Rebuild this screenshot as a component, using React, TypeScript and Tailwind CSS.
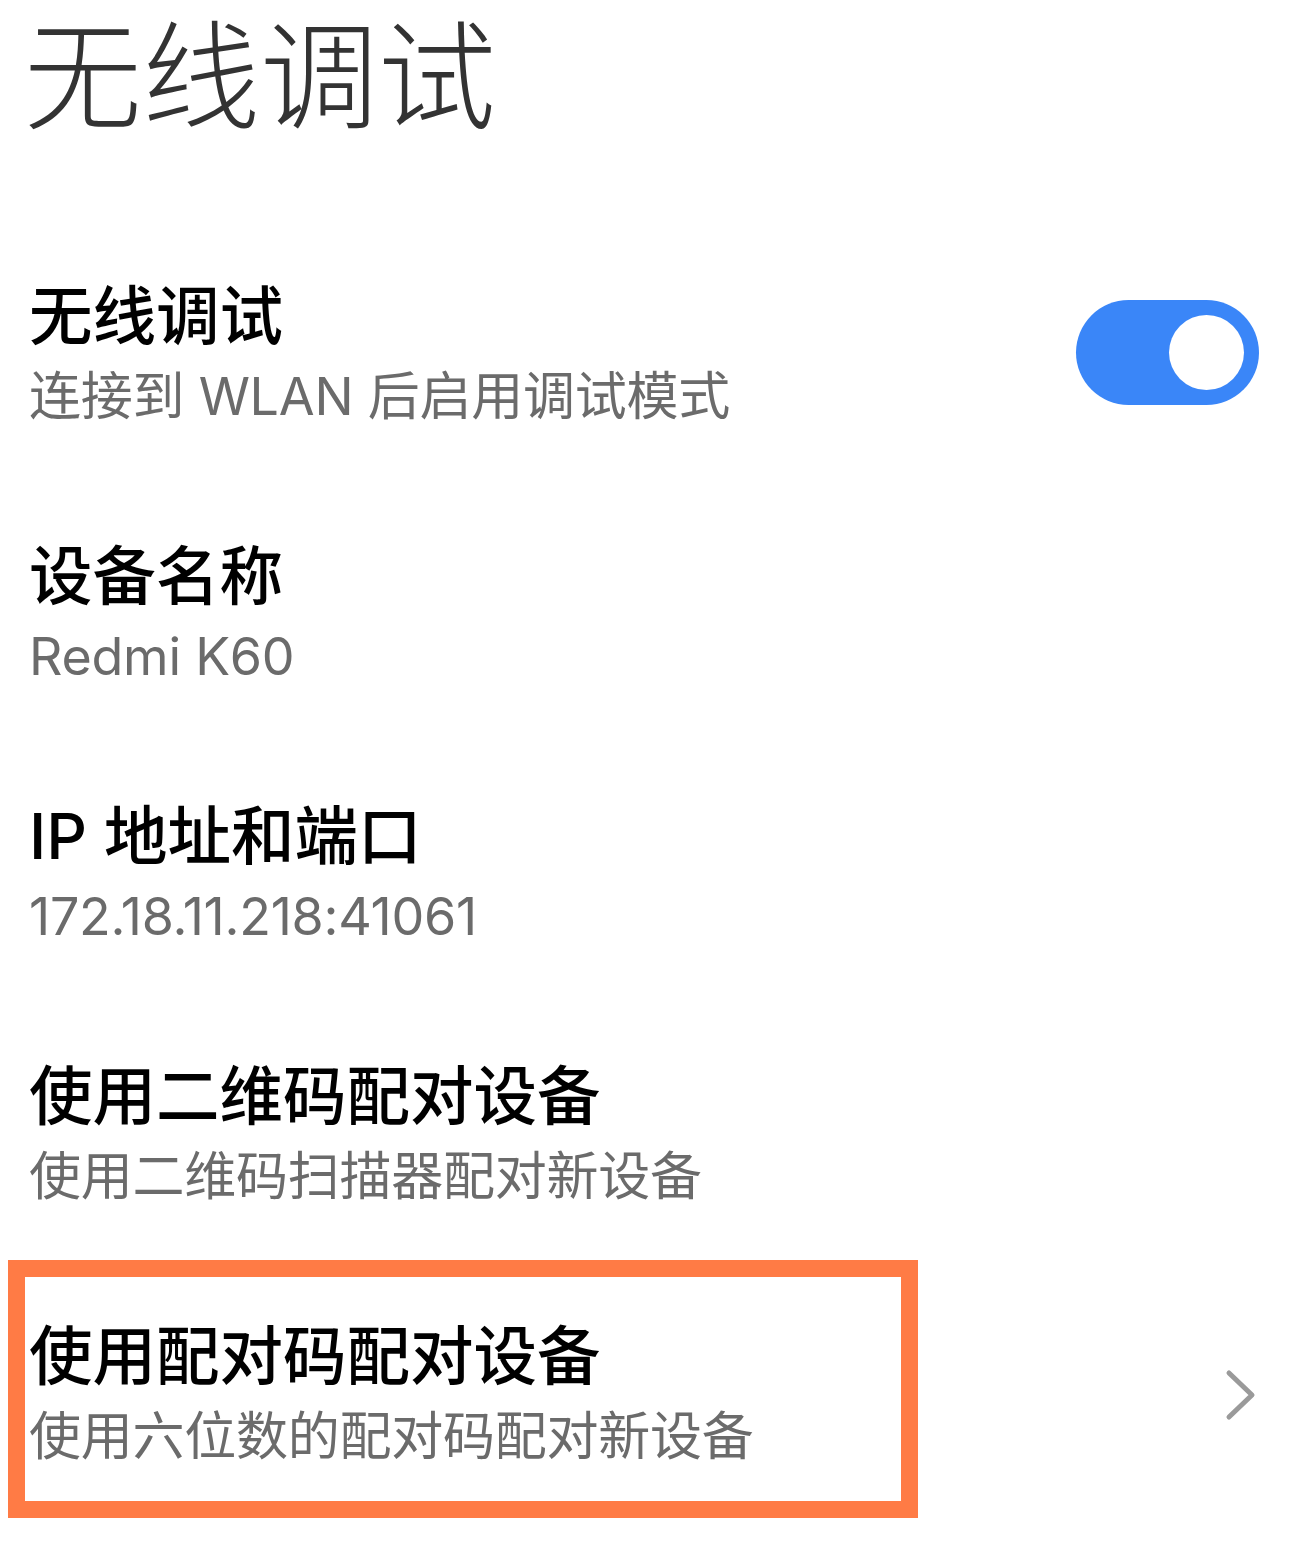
import React, { useState } from "react";

type Row = {
  title: string;
  subtitle: string;
  kind?: "switch" | "chevron";
  highlight?: boolean;
};

const rows: Row[] = [
  { title: "无线调试", subtitle: "连接到 WLAN 后启用调试模式", kind: "switch" },
  { title: "设备名称", subtitle: "Redmi K60" },
  { title: "IP 地址和端口", subtitle: "172.18.11.218:41061" },
  { title: "使用二维码配对设备", subtitle: "使用二维码扫描器配对新设备" },
  { title: "使用配对码配对设备", subtitle: "使用六位数的配对码配对新设备", kind: "chevron", highlight: true },
];

export default function App() {
  const [on, setOn] = useState(true);

  return (
    <div className="min-h-screen bg-white font-['Inter','Noto_Sans_CJK_SC',sans-serif]">
      <header className="h-[225px] pl-[24px] pt-[7px]">
        <h1 className="text-[118px] leading-[1.2] font-light text-[#333333]">无线调试</h1>
      </header>

      <div>
        {rows.map((r) => (
          <div key={r.title} className="relative flex h-[260px] items-center pl-[29px] pr-[44px]">
            <div className="flex flex-1 flex-col pb-[6px]">
              <div className="text-[63.5px] leading-[78px] font-medium text-black">{r.title}</div>
              <div className="mt-[11px] text-[52px] leading-[62px] tracking-[-0.25px] text-[#6b6b6b]">
                {r.subtitle}
              </div>
            </div>

            {r.kind === "switch" && (
              <button
                onClick={() => setOn(!on)}
                className={`mb-[5px] flex h-[105px] w-[183px] items-center rounded-full px-[15px] ${
                  on ? "justify-end bg-[#3a86f8]" : "justify-start bg-[#d9d9d9]"
                }`}
              >
                <span className="block h-[75px] w-[75px] rounded-full bg-white" />
              </button>
            )}

            {r.kind === "chevron" && (
              <svg width="32" height="52" viewBox="0 0 32 52" className="mr-[2px]" fill="none">
                <path
                  d="M4 4 L27 26 L4 48"
                  stroke="#9a9a9a"
                  strokeWidth="5"
                  strokeLinecap="round"
                  strokeLinejoin="round"
                />
              </svg>
            )}

            {r.highlight && (
              <div className="pointer-events-none absolute left-[8px] top-[-5px] h-[258px] w-[910px] border-[17px] border-[#ff7b45]" />
            )}
          </div>
        ))}
      </div>
    </div>
  );
}
